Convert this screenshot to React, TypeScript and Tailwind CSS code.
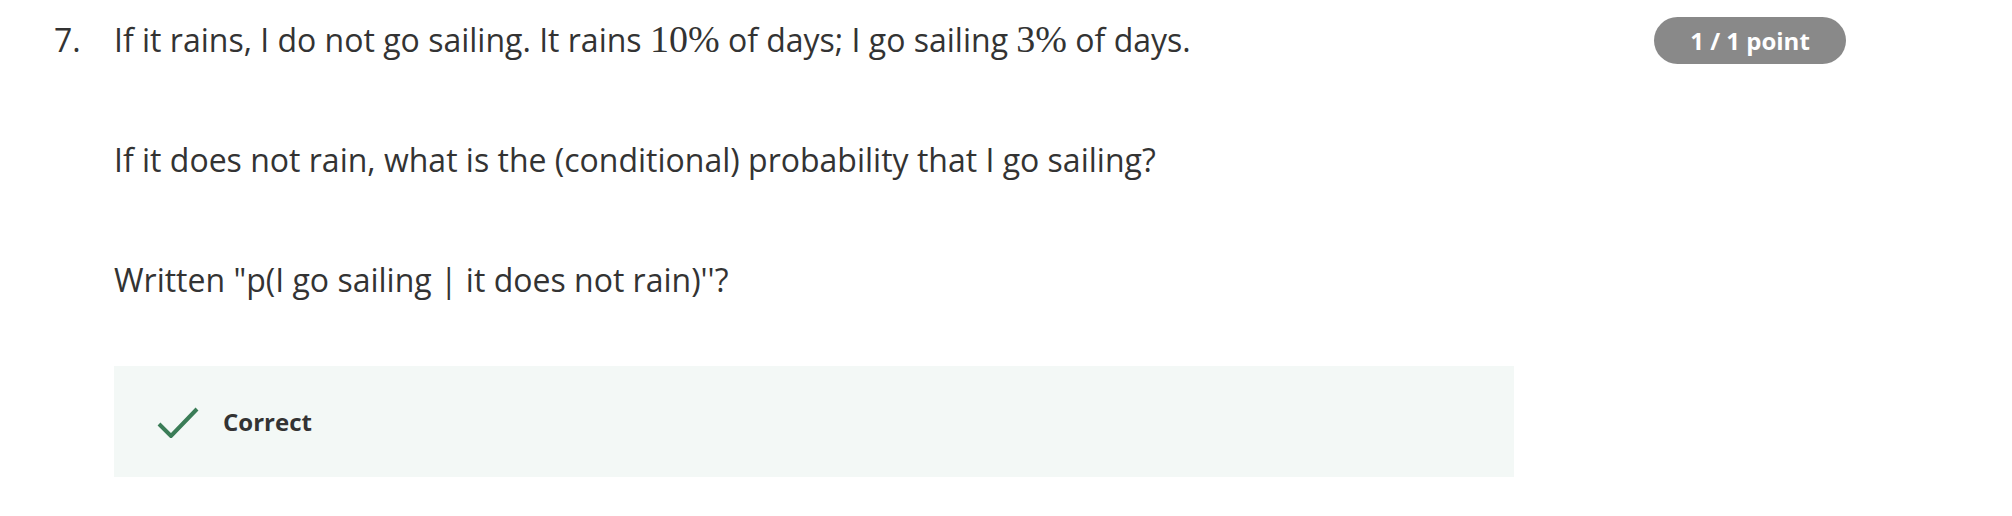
import React from "react";

const body = { fontFamily: '"Open Sans", "Noto Sans", sans-serif' };
const math = { fontFamily: '"Liberation Serif", "DejaVu Serif", serif' };

function M({ children }: { children: React.ReactNode }) {
  return (
    <span className="text-[38px] leading-none" style={math}>
      {children}
    </span>
  );
}

export default function App() {
  return (
    <div className="min-h-screen w-full bg-white text-[#333333]" style={body}>
      <div className="flex pt-[19px]">
        {/* question number */}
        <div className="w-[114px] shrink-0 pl-[54px] text-[32px] leading-[42px]">7.</div>

        {/* question body */}
        <div className="flex w-[1400px] shrink-0 flex-col">
          <p className="h-[42px] text-[32px] leading-[42px] whitespace-nowrap">
            If it rains, I do not go sailing. It rains <M>10%</M> of days; I go sailing <M>3%</M> of days.
          </p>
          <p className="mt-[78px] h-[42px] text-[32px] leading-[42px] whitespace-nowrap">
            If it does not rain, what is the (conditional) probability that I go sailing?
          </p>
          <p className="mt-[78px] h-[42px] text-[32px] leading-[42px] whitespace-nowrap">
            Written "p(I go sailing | it does not rain)''?
          </p>

          <div className="mt-[65px] flex h-[111px] items-center bg-[#f3f8f6] pl-[43px]">
            <svg width="42" height="32" viewBox="0 0 42 32" fill="none">
              <path d="M2 18 L14 30 L40 3" stroke="#3a7d57" strokeWidth="4" strokeLinecap="butt" />
            </svg>
            <span className="ml-[24px] text-[24px] font-bold leading-none text-[#333333]">Correct</span>
          </div>
        </div>

        {/* score badge */}
        <div className="ml-[140px] flex h-[47px] w-[192px] shrink-0 -translate-y-[2px] items-center justify-center rounded-full bg-[#898989] text-[24px] font-bold text-white">
          1 / 1 point
        </div>
      </div>
    </div>
  );
}
